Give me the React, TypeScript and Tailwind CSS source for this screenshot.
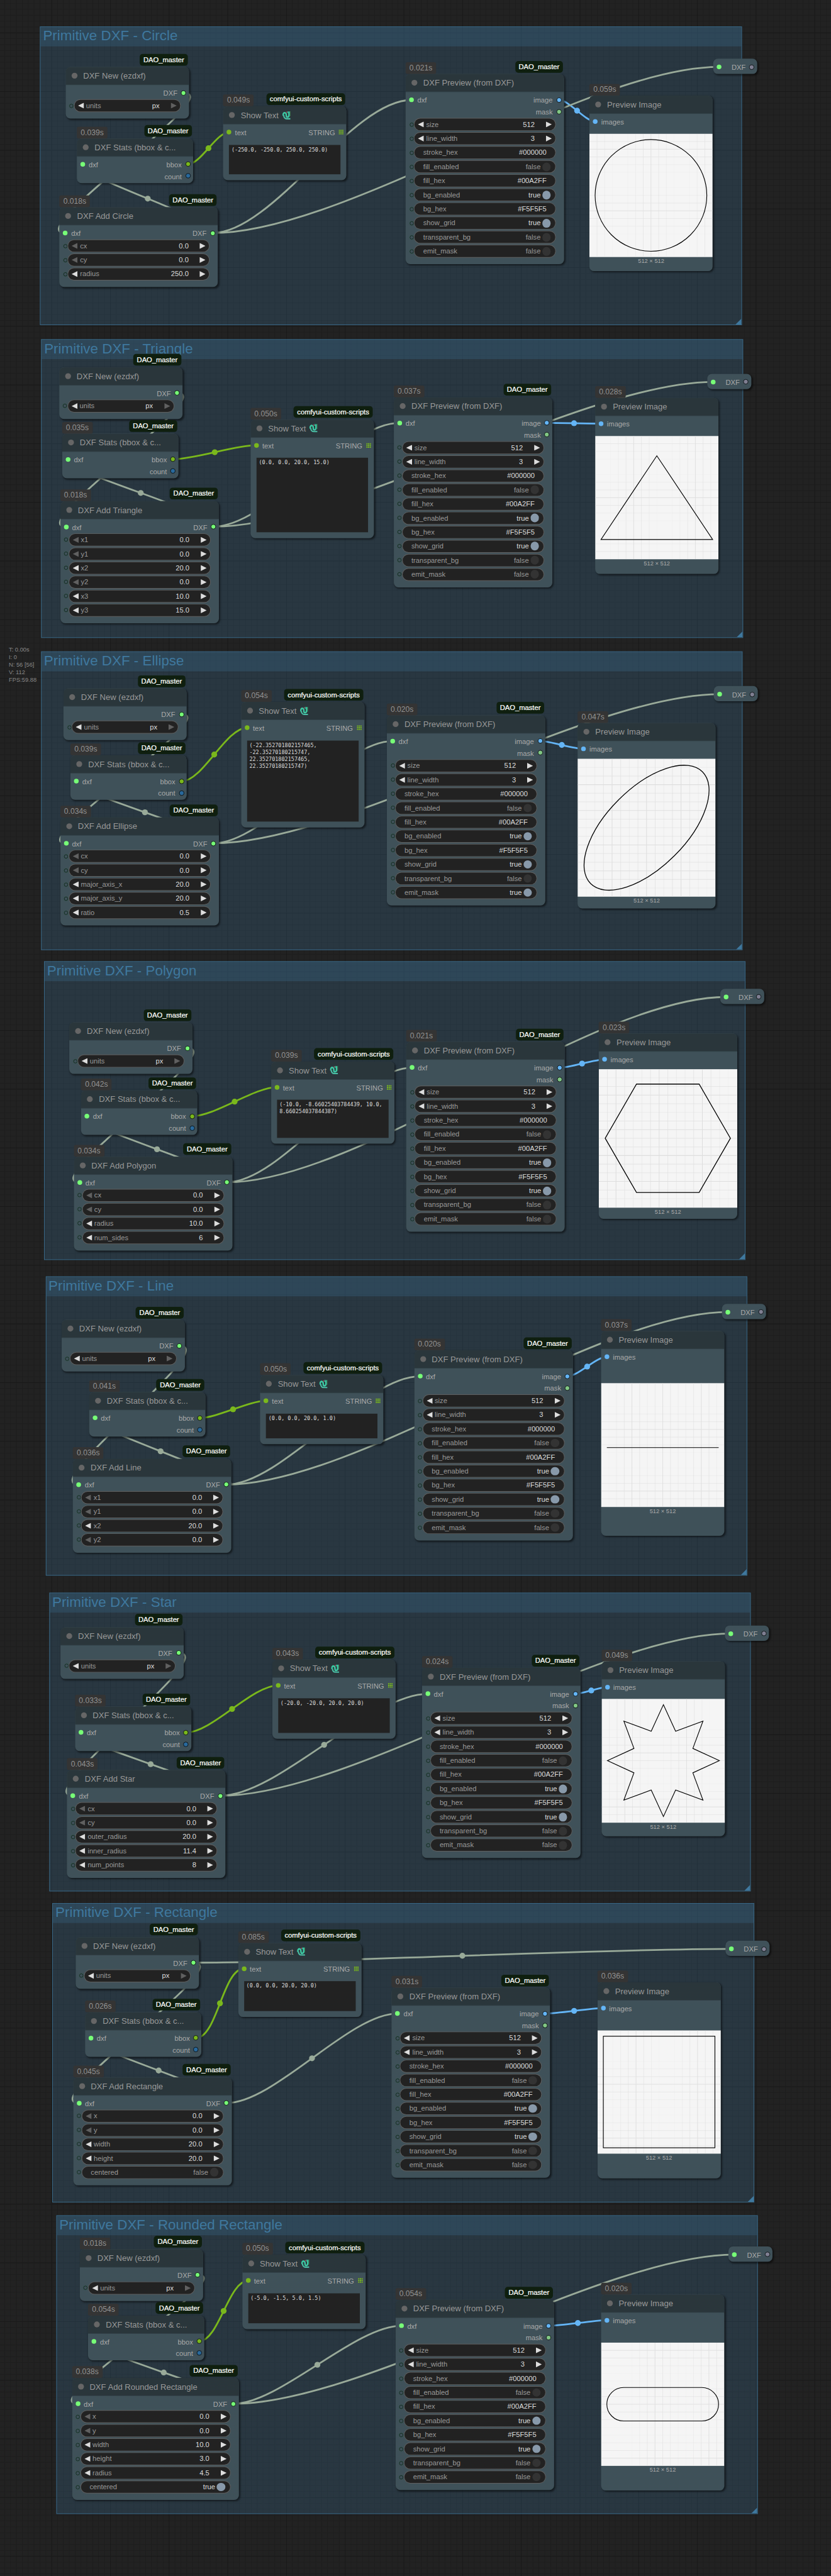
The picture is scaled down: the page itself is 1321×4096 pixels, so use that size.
import React from "react";

type Widget = { kind: "number" | "combo" | "text" | "toggle"; label: string; value: string; min?: boolean };
type Slot = { input?: string; inputColor?: string; output?: string; outputColor?: string; grid?: boolean };
type Pos = { x: number; y: number; time?: string };

type Panel = {
  title: string;
  group: { x: number; y: number; w: number; h: number };
  create: Pos;
  stats: Pos;
  add: Pos & { title: string; w?: number; widgets: Widget[] };
  text: Pos & { h: number; lines: string[] };
  preview: Pos & { emit?: string };
  image: Pos & { w: number; h: number; top: number; cols: number[]; rows: number[]; shape: React.ReactNode };
  reroute: { x: number; y: number };
  rerouteFromNew?: boolean;
};

const DXF = "#77ff77";
const BBOX = "#7ab81c";
const IMAGE = "#64b5f6";
const DXF_LINK = "#99aa99";

const num = (label: string, value: string, min = false): Widget => ({ kind: "number", label, value, min });

const starPoints = Array.from({ length: 16 }, (_, i) => {
  const r = i % 2 === 0 ? 232 : 132.2;
  const a = (i * Math.PI) / 8;
  return `${(256 + r * Math.sin(a)).toFixed(1)},${(256 - r * Math.cos(a)).toFixed(1)}`;
}).join(" ");

const panels: Panel[] = [
  {
    title: "Primitive DXF - Circle",
    group: { x: 68.3, y: 44.5, w: 1195.4, h: 509.8 },
    create: { x: 111.7, y: 144.4 },
    stats: { x: 131, y: 265.8, time: "0.039s" },
    add: { x: 101.4, y: 383.1, time: "0.018s", title: "DXF Add Circle", widgets: [num("cx", "0.0", true), num("cy", "0.0", true), num("radius", "250.0")] },
    text: { x: 380.3, y: 211.4, h: 95.5, time: "0.049s", lines: ["(-250.0, -250.0, 250.0, 250.0)"] },
    preview: { x: 691, y: 156.4, time: "0.021s" },
    image: { x: 1004.3, y: 192.9, w: 210, h: 269.5, top: 35.2, time: "0.059s", cols: [8, 0, 16], rows: [2, 10], shape: <circle cx="256" cy="256" r="232" /> },
    reroute: { x: 1215.1, y: 100.1 },
  },
  {
    title: "Primitive DXF - Triangle",
    group: { x: 70.2, y: 578.3, w: 1195.5, h: 509 },
    create: { x: 100.5, y: 655.5 },
    stats: { x: 105.8, y: 768.5, time: "0.035s" },
    add: {
      x: 102.7, y: 883.5, time: "0.018s", title: "DXF Add Triangle",
      widgets: [num("x1", "0.0", true), num("y1", "0.0", true), num("x2", "20.0"), num("y2", "0.0", true), num("x3", "10.0"), num("y3", "15.0")],
    },
    text: { x: 426.9, y: 744.7, h: 172.4, time: "0.050s", lines: ["(0.0, 0.0, 20.0, 15.0)"] },
    preview: { x: 670.9, y: 706.5, time: "0.037s" },
    image: { x: 1014, y: 707.9, w: 210, h: 269.8, top: 35.3, time: "0.028s", cols: [5, 13], rows: [0, 8, 16], shape: <polygon points="24,430 488,430 256,82" /> },
    reroute: { x: 1204.8, y: 636.9 },
  },
  {
    title: "Primitive DXF - Ellipse",
    group: { x: 69.8, y: 1110, w: 1195.2, h: 509.3 },
    create: { x: 108, y: 1203.1 },
    stats: { x: 120.2, y: 1317.4, time: "0.039s" },
    add: {
      x: 102.6, y: 1423.1, time: "0.034s", title: "DXF Add Ellipse",
      widgets: [num("cx", "0.0", true), num("cy", "0.0", true), num("major_axis_x", "20.0"), num("major_axis_y", "20.0"), num("ratio", "0.5")],
    },
    text: { x: 410.8, y: 1226.2, h: 184.1, time: "0.054s", lines: ["(-22.352701802157465,", "-22.35270180215747,", "22.352701802157465,", "22.35270180215747)"] },
    preview: { x: 659, y: 1248.9, time: "0.020s", emit: "true" },
    image: {
      x: 984.2, y: 1262, w: 235, h: 286, top: 31.2, time: "0.047s", cols: [4, 8, 12], rows: [3, 6, 10, 13],
      shape: <ellipse cx="256" cy="256" rx="293.5" ry="146.7" transform="rotate(-45 256 256)" />,
    },
    reroute: { x: 1215.8, y: 1169 },
  },
  {
    title: "Primitive DXF - Polygon",
    group: { x: 75.1, y: 1637.6, w: 1195, h: 509.7 },
    create: { x: 118, y: 1772 },
    stats: { x: 138.4, y: 1888.1, time: "0.042s" },
    add: {
      x: 125.6, y: 2000.7, time: "0.034s", title: "DXF Add Polygon",
      widgets: [num("cx", "0.0", true), num("cy", "0.0", true), num("radius", "10.0"), num("num_sides", "6")],
    },
    text: { x: 462, y: 1838.5, h: 110.4, time: "0.039s", lines: ["(-10.0, -8.66025403784439, 10.0,", "8.660254037844387)"] },
    preview: { x: 692, y: 1805.4, time: "0.021s" },
    image: {
      x: 1020.2, y: 1791.3, w: 235.4, h: 286, top: 31, time: "0.023s", cols: [2, 7, 12], rows: [3, 7, 10, 13],
      shape: <polygon points="24,256 140,55.1 372,55.1 488,256 372,456.9 140,456.9" />,
    },
    reroute: { x: 1227, y: 1684.9 },
  },
  {
    title: "Primitive DXF - Line",
    group: { x: 77.5, y: 2175.3, w: 1195.8, h: 509.5 },
    create: { x: 104.8, y: 2279.3 },
    stats: { x: 151.8, y: 2402.2, time: "0.041s" },
    add: {
      x: 124.4, y: 2515.9, time: "0.036s", title: "DXF Add Line",
      widgets: [num("x1", "0.0", true), num("y1", "0.0", true), num("x2", "20.0"), num("y2", "0.0", true)],
    },
    text: { x: 443.3, y: 2373, h: 87.7, time: "0.050s", lines: ["(0.0, 0.0, 20.0, 1.0)"] },
    preview: { x: 705.5, y: 2331.3, time: "0.020s" },
    image: { x: 1024, y: 2298.2, w: 210.2, h: 318.5, top: 59.2, time: "0.037s", cols: [4, 8, 13], rows: [6, 14], shape: <line x1="24" y1="267.5" x2="488" y2="267.5" /> },
    reroute: { x: 1230.4, y: 2221.8 },
  },
  {
    title: "Primitive DXF - Star",
    group: { x: 83.9, y: 2714.2, w: 1195, h: 509.3 },
    create: { x: 103, y: 2802.6 },
    stats: { x: 127.9, y: 2938.4, time: "0.033s" },
    add: {
      x: 114.4, y: 3046.1, time: "0.043s", title: "DXF Add Star",
      widgets: [num("cx", "0.0", true), num("cy", "0.0", true), num("outer_radius", "20.0"), num("inner_radius", "11.4"), num("num_points", "8")],
    },
    text: { x: 463.8, y: 2858, h: 104.5, time: "0.043s", lines: ["(-20.0, -20.0, 20.0, 20.0)"] },
    preview: { x: 719, y: 2872.4, time: "0.024s" },
    image: { x: 1024.7, y: 2860.9, w: 210.4, h: 268.3, top: 34.3, time: "0.049s", cols: [3, 11], rows: [7, 14], shape: <polygon points={starPoints} /> },
    reroute: { x: 1235.3, y: 2769.7 },
  },
  {
    title: "Primitive DXF - Rectangle",
    group: { x: 89.4, y: 3243.2, w: 1195.2, h: 509.4 },
    create: { x: 128.6, y: 3330.5 },
    stats: { x: 144.9, y: 3458.9, time: "0.026s" },
    add: {
      x: 124.7, y: 3569.7, time: "0.045s", title: "DXF Add Rectangle",
      widgets: [num("x", "0.0", true), num("y", "0.0", true), num("width", "20.0"), num("height", "20.0"), { kind: "toggle", label: "centered", value: "false" }],
    },
    text: { x: 405.6, y: 3340.7, h: 96.2, time: "0.085s", lines: ["(0.0, 0.0, 20.0, 20.0)"] },
    preview: { x: 667.4, y: 3417.2, time: "0.031s" },
    image: { x: 1017.8, y: 3408, w: 209.8, h: 303.8, top: 52.3, time: "0.036s", cols: [5, 13], rows: [7, 14], shape: <rect x="24" y="24" width="464" height="464" /> },
    reroute: { x: 1235.8, y: 3307 },
    rerouteFromNew: true,
  },
  {
    title: "Primitive DXF - Rounded Rectangle",
    group: { x: 95.9, y: 3774.6, w: 1195.6, h: 509.3 },
    create: { x: 135.8, y: 3862.6, time: "0.018s" },
    stats: { x: 150.3, y: 3975.6, time: "0.054s" },
    add: {
      x: 122.6, y: 4082.2, w: 284, time: "0.038s", title: "DXF Add Rounded Rectangle",
      widgets: [num("x", "0.0", true), num("y", "0.0", true), num("width", "10.0"), num("height", "3.0"), num("radius", "4.5"), { kind: "toggle", label: "centered", value: "true" }],
    },
    text: { x: 412.7, y: 3872.4, h: 96.5, time: "0.050s", lines: ["(-5.0, -1.5, 5.0, 1.5)"] },
    preview: { x: 673.8, y: 3949.3, time: "0.054s" },
    image: {
      x: 1024.1, y: 3939.8, w: 210, h: 304, top: 52.5, time: "0.020s", cols: [7, 14], rows: [1, 8, 15],
      shape: <rect x="24" y="186.4" width="464" height="139.2" rx="69.6" />,
    },
    reroute: { x: 1241.3, y: 3827.9 },
  },
];

const previewWidgets = (emit: string): Widget[] => [
  num("size", "512"),
  num("line_width", "3"),
  { kind: "text", label: "stroke_hex", value: "#000000" },
  { kind: "toggle", label: "fill_enabled", value: "false" },
  { kind: "text", label: "fill_hex", value: "#00A2FF" },
  { kind: "toggle", label: "bg_enabled", value: "true" },
  { kind: "text", label: "bg_hex", value: "#F5F5F5" },
  { kind: "toggle", label: "show_grid", value: "true" },
  { kind: "toggle", label: "transparent_bg", value: "false" },
  { kind: "toggle", label: "emit_mask", value: emit },
];

function Arrow({ dir, dim }: { dir: "left" | "right"; dim?: boolean }) {
  return (
    <svg viewBox="0 0 10 10" className={`h-2.5 w-2.5 shrink-0 ${dim ? "fill-[#606060]" : "fill-[#dddddd]"}`}>
      <path d={dir === "left" ? "M10 0 L0 5 L10 10 Z" : "M0 0 L10 5 L0 10 Z"} />
    </svg>
  );
}

function WidgetRow({ w }: { w: Widget }) {
  const stepper = w.kind === "number" || w.kind === "combo";
  return (
    <div className="flex h-5 items-center pl-[6.5px] pr-[15px]">
      <span className="mr-[1.5px] h-[7px] w-[7px] shrink-0 rounded-full border border-[#12291f] outline outline-[#2e5a46]/30" />
      <div className={`flex h-5 flex-1 items-center rounded-full bg-[#222222] text-[12px] leading-5 text-[#999999] ring-1 ring-[#5f5f5f] ${stepper ? "px-[6px]" : "pl-[15px]"}`}>
        {stepper && <Arrow dir="left" dim={w.min} />}
        <span className={stepper ? "ml-[4px]" : ""}>{w.label}</span>
        <span className={`ml-auto ${w.value === "false" ? "text-[#999999]" : "text-[#dddddd]"}`}>{w.value}</span>
        {stepper && (
          <span className="ml-[19px] flex">
            <Arrow dir="right" dim={w.kind === "combo"} />
          </span>
        )}
        {w.kind === "text" && <span className="w-[15px]" />}
        {w.kind === "toggle" && (
          <span className={`ml-[2.8px] mr-[7.8px] h-[14.4px] w-[14.4px] rounded-full ${w.value === "true" ? "bg-[#8899aa]" : "bg-[#333333]"}`} />
        )}
      </div>
    </div>
  );
}

function GridSlot() {
  return (
    <svg viewBox="0 0 8 8" className="ml-[6.5px] mr-[5px] h-2 w-2 fill-[#7ab81c]">
      {[0, 3, 6].map((y) => [0, 3, 6].map((x) => <rect key={`${x}-${y}`} x={x} y={y} width="2.2" height="2.2" />))}
    </svg>
  );
}

function SlotRow({ s }: { s: Slot }) {
  return (
    <div className="flex h-5 items-center text-[12px] leading-5 text-[#aaaaaa]">
      {s.input && (
        <>
          <span className="ml-[6px] h-2 w-2 rounded-full" style={{ background: s.inputColor }} />
          <span className="ml-[6px] pt-[2px]">{s.input}</span>
        </>
      )}
      <span className="flex-1" />
      {s.output && <span className="pt-[2px]">{s.output}</span>}
      {s.output && !s.grid && <span className="ml-[6px] mr-[4.5px] h-[9px] w-[9px] rounded-full border border-[#0c1214]" style={{ background: s.outputColor }} />}
      {s.grid && <GridSlot />}
    </div>
  );
}

function Snake() {
  return (
    <svg viewBox="0 0 15 15" className="ml-[6px] h-[15px] w-[15px]">
      <path d="M1.6 8.2 C0.6 4.2 3.2 2.2 5.4 3.6 C7.8 5.2 5.8 8.8 7.4 10.2 C9.2 11.2 11.6 9.6 11.4 7 L11.4 2.2 H8.2" fill="none" stroke="#3cc9a3" strokeWidth="2.7" />
      <path d="M2.4 7.5 C2.4 11 4.4 13.4 7.4 13.4 H13.6" fill="none" stroke="#4bbfa6" strokeWidth="2.3" />
      <path d="M13.4 1 V9.5" stroke="#4f9a52" strokeWidth="1" strokeDasharray="1.2 0.9" />
      <rect x="6.4" y="1.3" width="1.8" height="1.8" fill="#b03a55" />
      <rect x="9" y="1.4" width="1.2" height="1" fill="#1b5e56" />
    </svg>
  );
}

type NodeProps = {
  pos: Pos;
  w: number;
  h: number;
  title: string;
  badge?: string;
  snake?: boolean;
  slots: Slot[];
  widgets?: Widget[];
  children?: React.ReactNode;
};

function GraphNode({ pos, w, h, title, badge, snake, slots, widgets, children }: NodeProps) {
  return (
    <div className="absolute" style={{ left: pos.x, top: pos.y - 30, width: w, height: h + 30 }}>
      <div className="flex h-full flex-col overflow-hidden rounded-lg bg-[#3f5159] shadow-[2px_2px_3px_rgba(0,0,0,0.5)]">
        <div className="flex h-[30px] shrink-0 items-center bg-[#2a363b] pl-2.5 shadow-[0_1px_0_rgba(0,0,0,0.2)]">
          <span className="mr-[10px] h-2.5 w-2.5 shrink-0 rounded-full bg-[#666666]" />
          <span className="whitespace-nowrap text-[14px] leading-[30px] text-[#999999]">{title}</span>
          {snake && <Snake />}
        </div>
        <div className="flex flex-1 flex-col pt-1">
          {slots.map((s, i) => (
            <SlotRow key={i} s={s} />
          ))}
          {widgets && (
            <div className="mt-0.5 flex flex-col gap-1">
              {widgets.map((wd) => (
                <WidgetRow key={wd.label} w={wd} />
              ))}
            </div>
          )}
          {children}
        </div>
      </div>
      {pos.time && (
        <span className="absolute -top-[20px] left-0 h-5 w-[52px] rounded-[3px] bg-[#343434] text-center text-[13px] leading-5 text-[#929292]">{pos.time}</span>
      )}
      {badge && (
        <span className="absolute -top-[22.5px] right-[2px] h-5 whitespace-nowrap rounded-[5px] bg-[#0f1f0f] px-[6px] text-[12px] leading-5 text-white [-webkit-text-stroke:0.25px_white]">
          {badge}
        </span>
      )}
    </div>
  );
}

function strength(i: number, peaks: number[]) {
  const d = Math.min(...peaks.map((p) => Math.abs(p - i)));
  return [1, 0.65, 0.4, 0.15][d] ?? 0;
}

function PreviewPicture({ cols, rows, shape }: { cols: number[]; rows: number[]; shape: React.ReactNode }) {
  const ticks = Array.from({ length: 15 }, (_, i) => i + 1);
  return (
    <svg viewBox="0 0 512 512" className="block h-full w-full bg-[#f5f5f5]">
      <g stroke="#dedede" strokeWidth="2.4">
        {ticks.map((i) => (
          <line key={`c${i}`} x1={i * 32} x2={i * 32} y1="0" y2="512" opacity={strength(i, cols)} />
        ))}
        {ticks.map((i) => (
          <line key={`r${i}`} y1={i * 32} y2={i * 32} x1="0" x2="512" opacity={strength(i, rows)} />
        ))}
      </g>
      <g fill="none" stroke="#000000" strokeWidth="3">
        {shape}
      </g>
    </svg>
  );
}

function Link({ from, to, color }: { from: [number, number]; to: [number, number]; color: string }) {
  const d = Math.hypot(to[0] - from[0], to[1] - from[1]) * 0.25;
  return (
    <g>
      <path d={`M${from[0]} ${from[1]} C${from[0] + d} ${from[1]} ${to[0] - d} ${to[1]} ${to[0]} ${to[1]}`} fill="none" stroke={color} strokeWidth="3" />
      <circle cx={(from[0] + to[0]) / 2} cy={(from[1] + to[1]) / 2} r="5" fill={color} />
    </g>
  );
}

const outAt = (p: Pos, w: number): [number, number] => [p.x + w - 9, p.y + 14];
const inAt = (p: { x: number; y: number }): [number, number] => [p.x + 10, p.y + 14];

function PanelLinks({ p }: { p: Panel }) {
  const addOut = outAt(p.add, p.add.w ?? 270);
  const newOut = outAt(p.create, 210);
  return (
    <g>
      <Link from={newOut} to={inAt(p.add)} color={DXF_LINK} />
      <Link from={addOut} to={inAt(p.stats)} color={DXF_LINK} />
      <Link from={addOut} to={inAt(p.preview)} color={DXF_LINK} />
      <Link from={outAt(p.stats, 198)} to={inAt(p.text)} color={BBOX} />
      <Link from={outAt(p.preview, 270)} to={inAt(p.image)} color={IMAGE} />
      <Link from={p.rerouteFromNew ? newOut : addOut} to={inAt(p.reroute)} color={DXF_LINK} />
    </g>
  );
}

function GroupBox({ p }: { p: Panel }) {
  const { x, y, w, h } = p.group;
  return (
    <section className="absolute border border-[#3f789e]/80 bg-[#3f789e]/25" style={{ left: x, top: y, width: w, height: h }}>
      <h2 className="h-[33px] bg-[#3f789e]/25 pl-1 text-[24px] leading-[30px] text-[#3f789e]">{p.title}</h2>
      <svg viewBox="0 0 10 10" className="absolute bottom-0 right-0 h-2.5 w-2.5 fill-[#3f789e]">
        <path d="M10 0 V10 H0 Z" />
      </svg>
    </section>
  );
}

function PanelNodes({ p }: { p: Panel }) {
  const a = p.add;
  return (
    <>
      <GraphNode
        pos={p.create} w={210} h={58} title="DXF New (ezdxf)" badge="DAO_master"
        slots={[{ output: "DXF", outputColor: DXF }]}
        widgets={[{ kind: "combo", label: "units", value: "px" }]}
      />
      <GraphNode
        pos={p.stats} w={198} h={46} title="DXF Stats (bbox & c..." badge="DAO_master"
        slots={[{ input: "dxf", inputColor: DXF, output: "bbox", outputColor: BBOX }, { output: "count", outputColor: "#29699c" }]}
      />
      <GraphNode
        pos={a} w={a.w ?? 270} h={34 + a.widgets.length * 24} title={a.title} badge="DAO_master"
        slots={[{ input: "dxf", inputColor: DXF, output: "DXF", outputColor: DXF }]}
        widgets={a.widgets}
      />
      <GraphNode
        pos={p.text} w={210} h={p.text.h} title="Show Text" snake badge="comfyui-custom-scripts"
        slots={[{ input: "text", inputColor: BBOX, output: "STRING", grid: true }]}
      >
        <div className="mx-2.5 mb-2.5 mt-[11.6px] flex-1 bg-[#222222] px-1 pt-[2px] font-[DejaVu_Sans_Mono,monospace] text-[9.1px] leading-[12px] text-[#dddddd]">
          {p.text.lines.map((l) => (
            <div key={l} className="whitespace-pre">{l}</div>
          ))}
        </div>
      </GraphNode>
      <GraphNode
        pos={p.preview} w={270} h={294} title="DXF Preview (from DXF)" badge="DAO_master"
        slots={[{ input: "dxf", inputColor: DXF, output: "image", outputColor: IMAGE }, { output: "mask", outputColor: "#81c784" }]}
        widgets={previewWidgets(p.preview.emit ?? "false")}
      />
      <GraphNode pos={p.image} w={p.image.w} h={p.image.h} title="Preview Image" slots={[{ input: "images", inputColor: IMAGE }]}>
        <div className="shrink-0" style={{ marginTop: p.image.top - 24, height: p.image.w }}>
          <PreviewPicture cols={p.image.cols} rows={p.image.rows} shape={p.image.shape} />
        </div>
        <div className="text-center text-[10px] leading-[13px] text-[#aaaaaa]">512 × 512</div>
      </GraphNode>
      <div
        className="absolute h-[26px] w-[74.8px] rounded-lg bg-[#3f5159] pt-1 shadow-[2px_2px_3px_rgba(0,0,0,0.5)]"
        style={{ left: p.reroute.x, top: p.reroute.y }}
      >
        <div className="flex h-5 items-center text-[12px] leading-5 text-[#aaaaaa]">
          <span className="ml-[6px] h-2 w-2 rounded-full bg-[#77ff77]" />
          <span className="ml-auto pt-[2px]">DXF</span>
          <span className="ml-[6px] mr-[4.5px] h-[9px] w-[9px] rounded-full border border-[#0c1214] bg-[#7f7f92]" />
        </div>
      </div>
    </>
  );
}

export default function App() {
  return (
    <div className="h-[4096px] w-[1321px] overflow-hidden bg-[#222222]">
      <main
        className="relative h-[4390px] w-[1416px] origin-top-left scale-[0.9331] bg-[#222222] bg-[linear-gradient(to_right,#191919_1px,transparent_1px),linear-gradient(to_bottom,#191919_1px,transparent_1px),linear-gradient(to_right,#1d1d1d_1px,transparent_1px),linear-gradient(to_bottom,#1d1d1d_1px,transparent_1px)] bg-[size:100px_100px,100px_100px,10px_10px,10px_10px] bg-[position:87.5px_0,0_55.5px,7.5px_0,0_5.5px] font-['Liberation_Sans',Arial,sans-serif]"
      >
        <div className="absolute left-[15px] top-[1100px] text-[10px] leading-[13px] text-[#888888]">
          <div>T: 0.00s</div>
          <div>I: 0</div>
          <div>N: 56 [56]</div>
          <div>V: 112</div>
          <div>FPS:59.88</div>
        </div>
        {panels.map((p) => (
          <GroupBox key={p.title} p={p} />
        ))}
        <svg viewBox="0 0 1416 4389" className="absolute left-0 top-0 h-[4389px] w-[1416px]">
          {panels.map((p) => (
            <PanelLinks key={p.title} p={p} />
          ))}
        </svg>
        {panels.map((p) => (
          <PanelNodes key={p.title} p={p} />
        ))}
      </main>
    </div>
  );
}
